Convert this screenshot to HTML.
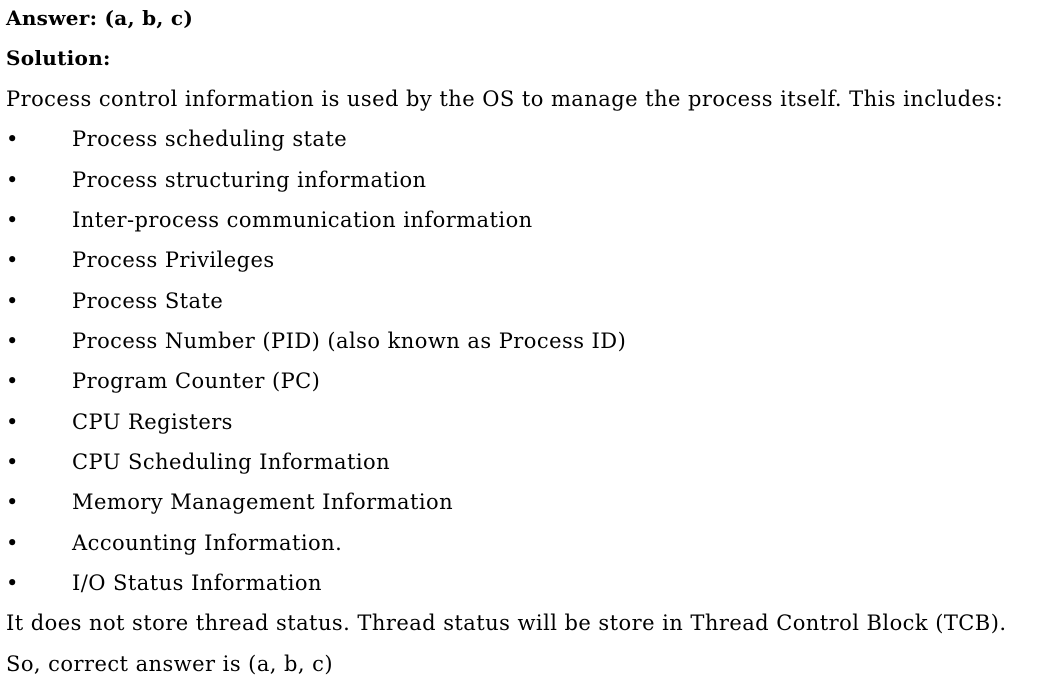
<!DOCTYPE html>
<html><head><meta charset="utf-8"><style>
html,body{margin:0;padding:0;background:#fff;}
body{width:1042px;height:685px;position:relative;overflow:hidden;font-family:"DejaVu Serif","Liberation Serif",serif;font-size:21px;letter-spacing:0.45px;color:#000;}
.l{position:absolute;left:6px;white-space:nowrap;line-height:24px;}
.b{font-weight:bold;font-size:20px;letter-spacing:0.3px;}
.bul{position:absolute;left:6px;white-space:nowrap;line-height:24px;}
.bul span{position:absolute;left:66px;}
</style></head><body>
<div class="l b" style="top:6px">Answer: (a, b, c)</div>
<div class="l b" style="top:46px">Solution:</div>
<div class="l" style="top:87px">Process control information is used by the OS to manage the process itself. This includes:</div>
<div class="bul" style="top:127px">•<span>Process scheduling state</span></div>
<div class="bul" style="top:168px">•<span>Process structuring information</span></div>
<div class="bul" style="top:208px">•<span>Inter-process communication information</span></div>
<div class="bul" style="top:248px">•<span>Process Privileges</span></div>
<div class="bul" style="top:289px">•<span>Process State</span></div>
<div class="bul" style="top:329px">•<span>Process Number (PID) (also known as Process ID)</span></div>
<div class="bul" style="top:369px">•<span>Program Counter (PC)</span></div>
<div class="bul" style="top:410px">•<span>CPU Registers</span></div>
<div class="bul" style="top:450px">•<span>CPU Scheduling Information</span></div>
<div class="bul" style="top:490px">•<span>Memory Management Information</span></div>
<div class="bul" style="top:531px">•<span>Accounting Information.</span></div>
<div class="bul" style="top:571px">•<span>I/O Status Information</span></div>
<div class="l" style="top:611px">It does not store thread status. Thread status will be store in Thread Control Block (TCB).</div>
<div class="l" style="top:652px">So, correct answer is (a, b, c)</div>
</body></html>
